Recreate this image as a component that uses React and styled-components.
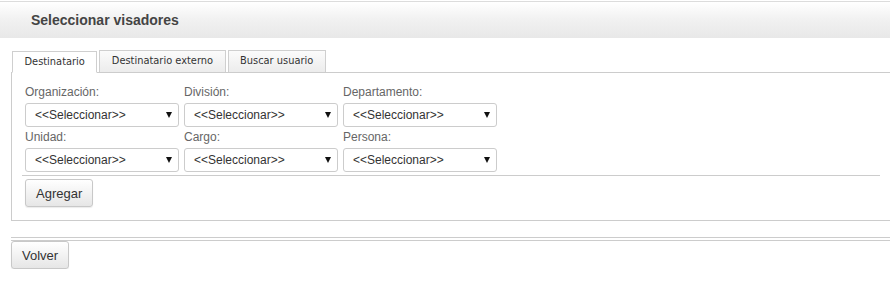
import React from 'react'
import styled, { createGlobalStyle } from 'styled-components'

const GlobalStyle = createGlobalStyle`
  html, body {
    margin: 0;
    padding: 0;
    background: #fff;
    overflow: hidden;
  }
  body {
    font-family: "Liberation Sans", Arial, sans-serif;
    color: #333;
  }
`

const fields = [
  { label: 'Organización:' },
  { label: 'División:' },
  { label: 'Departamento:' },
  { label: 'Unidad:' },
  { label: 'Cargo:' },
  { label: 'Persona:' },
]

const tabs = ['Destinatario', 'Destinatario externo', 'Buscar usuario']

function App() {
  return (
    <Page>
      <GlobalStyle />
      <Header>
        <Title>Seleccionar visadores</Title>
      </Header>

      <Content>
        <TabBar>
          {tabs.map((t, i) => (
            <Tab key={t} $active={i === 0}>{t}</Tab>
          ))}
        </TabBar>
        <Panel>
          <FieldGrid>
            {fields.map((f) => (
              <Field key={f.label}>
                <Label>{f.label}</Label>
                <SelectBox>
                  <span>&lt;&lt;Seleccionar&gt;&gt;</span>
                  <Arrow />
                </SelectBox>
              </Field>
            ))}
          </FieldGrid>
          <FormFooter>
            <Button>Agregar</Button>
          </FormFooter>
        </Panel>
      </Content>

      <Footer>
        <DoubleRule />
        <Button>Volver</Button>
      </Footer>
    </Page>
  )
}

export default App

const Page = styled.div`
  width: 100%;
`

const Header = styled.div`
  margin-top: 1px;
  border-top: 1px solid #dcdcdc;
  height: 36px;
  background: linear-gradient(to bottom, #ffffff 0%, #f2f2f2 45%, #e8e8e8 100%);
`

const Title = styled.h1`
  margin: 0;
  padding-left: 31px;
  font-size: 14px;
  line-height: 36px;
  font-weight: bold;
  color: #444;
`

const Content = styled.div`
  padding-left: 11px;
  margin-top: 12px;
`

const TabBar = styled.div`
  display: flex;
  align-items: flex-start;
  gap: 2px;
  height: 23px;
  margin-bottom: -1px;
  padding-left: 1px;
`

const Tab = styled.div`
  position: relative;
  z-index: 1;
  box-sizing: border-box;
  height: 22px;
  margin-top: ${(p) => (p.$active ? '1px' : '0')};
  padding: 0 11.5px;
  border: 1px solid #cfcfcf;
  border-bottom: ${(p) => (p.$active ? '1px solid #fff' : 'none')};
  background: ${(p) =>
    p.$active ? '#fff' : 'linear-gradient(to bottom, #fbfbfb 0%, #ececec 100%)'};
  font-family: "DejaVu Sans", Verdana, sans-serif;
  font-size: 9.85px;
  line-height: 20px;
  color: #333;
  white-space: nowrap;
`

const Panel = styled.div`
  box-sizing: border-box;
  width: 880px;
  border: 1px solid #cccccc;
  padding: 9px 10px 13px;
`

const FieldGrid = styled.div`
  display: grid;
  grid-template-columns: repeat(3, 154px);
  column-gap: 5px;
  padding-left: 3px;
`

const Field = styled.div`
  display: flex;
  flex-direction: column;
`

const Label = styled.label`
  font-size: 12px;
  line-height: 21px;
  color: #666;
`

const SelectBox = styled.div`
  box-sizing: border-box;
  display: flex;
  align-items: center;
  justify-content: space-between;
  height: 24px;
  padding: 0 6px 0 9px;
  border: 1px solid #cccccc;
  border-radius: 3px;
  background: #fff;
  font-size: 12px;
  color: #333;
`

const Arrow = styled.span`
  width: 0;
  height: 0;
  margin-top: -1px;
  border-left: 3px solid transparent;
  border-right: 3px solid transparent;
  border-top: 6px solid #111;
`

const FormFooter = styled.div`
  margin-top: 3px;
  border-top: 1px solid #cccccc;
  padding: 3px 0 0 3px;
`

const Button = styled.button`
  box-sizing: border-box;
  height: 28px;
  padding: 0 10px;
  border: 1px solid #c8c8c8;
  border-radius: 3px;
  background: linear-gradient(to bottom, #ffffff 0%, #e6e6e6 100%);
  box-shadow: 0 1px 1px rgba(0, 0, 0, 0.08);
  font-family: "Liberation Sans", Arial, sans-serif;
  font-size: 13px;
  color: #333;
  cursor: pointer;
`

const Footer = styled.div`
  margin-top: 16px;
  padding-left: 11px;
`

const DoubleRule = styled.div`
  height: 2px;
  border-top: 1px solid #cccccc;
  border-bottom: 1px solid #cccccc;
`
